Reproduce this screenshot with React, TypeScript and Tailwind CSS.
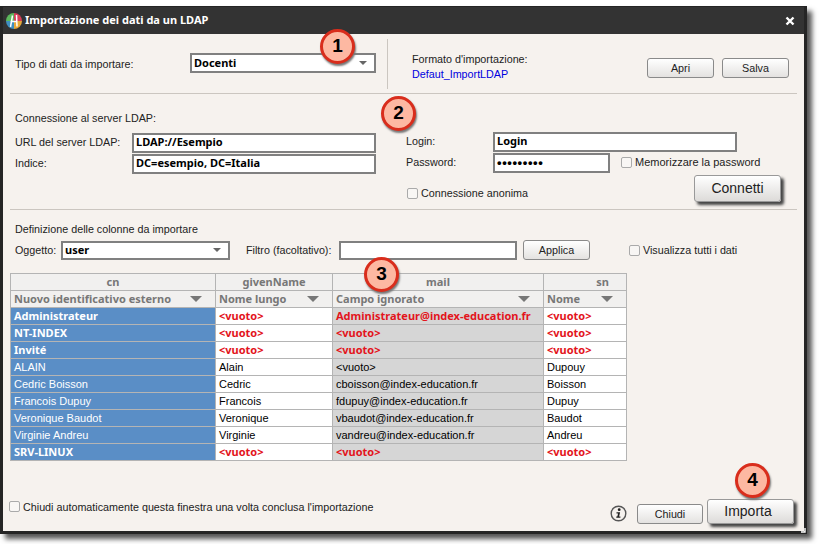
import React from "react";

const sans = "font-['Liberation_Sans',Arial,sans-serif] text-[10.75px] text-[#222]";
const sansCell = "font-['Liberation_Sans',Arial,sans-serif] text-[11px]";
const bold = "font-['Noto_Sans',Verdana,sans-serif] font-bold text-[11px]";

function Caret() {
  return <span className="w-0 h-0 border-x-[4px] border-x-transparent border-t-[4px] border-t-[#666]" />;
}

function Field({ w, h, value, caret, dots }: { w: string; h: string; value?: string; caret?: boolean; dots?: boolean }) {
  return (
    <div className={`${w} ${h} shrink-0 bg-white border-2 border-[#808080] flex items-center justify-between pl-[2px] pr-[7px] ${bold} text-black`}>
      {dots ? <span className="font-['Liberation_Sans',sans-serif] text-[13px] tracking-[0.6px]">•••••••••</span> : <span>{value}</span>}
      {caret && <Caret />}
    </div>
  );
}

function Btn({ label, w }: { label: string; w: string }) {
  return (
    <div className={`${w} h-[20px] shrink-0 rounded-[3px] border border-[#8a8a8a] bg-gradient-to-b from-white to-[#e4e2e0] flex items-center justify-center ${sans}`}>
      {label}
    </div>
  );
}

function BigBtn({ label, w, h, shift }: { label: string; w: string; h: string; shift?: string }) {
  return (
    <div className={`${w} ${h} ${shift ?? ""} shrink-0 rounded-[3px] border border-[#999] bg-gradient-to-b from-white to-[#dddbd9] shadow-[3px_3px_3px_#444] flex items-center justify-center font-['Liberation_Sans',Arial,sans-serif] text-[14px] text-[#222]`}>
      {label}
    </div>
  );
}

function Check({ label, wide }: { label: string; wide?: boolean }) {
  return (
    <div className={`flex items-center gap-[3px] ${sans}`}>
      <span className="w-[11px] h-[11px] rounded-[2px] border border-[#aaa] bg-[#f8f6f4]" />
      <span className={wide ? "text-[11px]" : ""}>{label}</span>
    </div>
  );
}

function Callout({ n, x, y }: { n: number; x: string; y: string }) {
  return (
    <div className={`absolute ${x} ${y} w-[35px] h-[35px] rounded-full bg-[#fdb8a2] border-[3px] border-[#d92d1c] shadow-[1px_2px_2px_#777] flex items-center justify-center font-['Liberation_Sans',Arial,sans-serif] font-bold text-[19px] text-black`}>
      {n}
    </div>
  );
}

function Logo() {
  return (
    <svg width="16" height="16" viewBox="0 0 16 16" className="shrink-0">
      <path d="M8 8V0a8 8 0 0 0-8 8z" fill="#5cb85c" />
      <path d="M8 8V0a8 8 0 0 1 8 8z" fill="#d9405a" />
      <path d="M8 8h8a8 8 0 0 1-8 8z" fill="#e8a838" />
      <path d="M8 8v8a8 8 0 0 1-8-8z" fill="#3f8fc0" />
      <path d="M4.5 14 6.5 2.5M11 13.5 10.5 2M4.5 8.5h7" stroke="#fff" strokeWidth="1.5" fill="none" />
    </svg>
  );
}

type Row = { cn: string; given: string; mail: string; sn: string; strong?: boolean };
const V = "<vuoto>";
const rows: Row[] = [
  { cn: "Administrateur", given: V, mail: "Administrateur@index-education.fr", sn: V, strong: true },
  { cn: "NT-INDEX", given: V, mail: V, sn: V, strong: true },
  { cn: "Invité", given: V, mail: V, sn: V, strong: true },
  { cn: "ALAIN", given: "Alain", mail: V, sn: "Dupouy" },
  { cn: "Cedric Boisson", given: "Cedric", mail: "cboisson@index-education.fr", sn: "Boisson" },
  { cn: "Francois Dupuy", given: "Francois", mail: "fdupuy@index-education.fr", sn: "Dupuy" },
  { cn: "Veronique Baudot", given: "Veronique", mail: "vbaudot@index-education.fr", sn: "Baudot" },
  { cn: "Virginie Andreu", given: "Virginie", mail: "vandreu@index-education.fr", sn: "Andreu" },
  { cn: "SRV-LINUX", given: V, mail: V, sn: V, strong: true },
];

const cols = "grid grid-cols-[205px_117px_211px_83px]";
const cell = "h-[17px] border-r border-b border-[#b4b4b4] flex items-center px-[3px] overflow-hidden whitespace-nowrap";

function Table() {
  const heads = [
    ["cn", "Nuovo identificativo esterno"],
    ["givenName", "Nome lungo"],
    ["mail", "Campo ignorato"],
    ["sn", "Nome"],
  ];
  return (
    <div className="ml-[7px] mt-[13px] w-[617px] border-l border-t border-[#b4b4b4]">
      <div className={cols}>
        {heads.map(([h]) => (
          <div key={h} className={`${cell} ${h === "sn" ? "justify-end pr-[17px]" : "justify-center"} bg-[#f1f0ef] ${bold} text-[#777]`}>{h}</div>
        ))}
        {heads.map(([, h]) => (
          <div key={h} className={`${cell} justify-between bg-[#f1f0ef] ${bold} text-[#777] pr-[13px]`}>
            <span>{h}</span>
            <span className="w-0 h-0 border-x-[6px] border-x-transparent border-t-[6px] border-t-[#777]" />
          </div>
        ))}
        {rows.map((r) => {
          const red = () => (r.strong ? `${bold} text-[#e3141c]` : `${sansCell} text-black`);
          return (
            <React.Fragment key={r.cn}>
              <div className={`${cell} bg-[#5a8ec6] text-white ${r.strong ? bold : sansCell}`}>{r.cn}</div>
              <div className={`${cell} bg-white ${red()}`}>{r.given}</div>
              <div className={`${cell} bg-[#d6d6d6] ${red()}`}>{r.mail}</div>
              <div className={`${cell} bg-white ${red()}`}>{r.sn}</div>
            </React.Fragment>
          );
        })}
      </div>
    </div>
  );
}

export default function App() {
  return (
    <div className="w-[820px] h-[544px] bg-white overflow-hidden pt-[6px]">
      <div className="relative w-[807px] h-[528px] border-[3px] border-t border-[#252525] bg-[#f6f2ee] shadow-[5px_5px_5px_#555] flex flex-col">
        {/* Title bar */}
        <div className="h-[27px] shrink-0 bg-[#333] flex items-center pl-[3px] pr-[9px] gap-[3px]">
          <Logo />
          <span className="font-['Noto_Sans',Verdana,sans-serif] font-bold text-[11px] text-white">Importazione dei dati da un LDAP</span>
          <svg width="10" height="10" viewBox="0 0 10 10" className="ml-auto">
            <path d="M1.5 1.5 8.5 8.5M8.5 1.5 1.5 8.5" stroke="#fff" strokeWidth="2.4" />
          </svg>
        </div>

        {/* Section 1 */}
        <div className="mx-[7px] h-[60px] shrink-0 border-b border-[#cbc6c0] flex">
          <div className={`pl-[5px] w-[180px] pt-[22px] ${sans}`}>Tipo di dati da importare:</div>
          <div className="pt-[19px]"><Field w="w-[186px]" h="h-[20px]" value="Docenti" caret /></div>
          <div className="ml-[11px] mt-[5px] w-px h-[50px] bg-[#cbc6c0]" />
          <div className={`ml-[24px] pt-[18px] leading-[15px] w-[235px] ${sans}`}>
            <div>Formato d'importazione:</div>
            <div className="text-[#0000e0]">Defaut_ImportLDAP</div>
          </div>
          <div className="pt-[24px] flex gap-[8px]">
            <Btn label="Apri" w="w-[67px]" />
            <Btn label="Salva" w="w-[67px]" />
          </div>
        </div>

        {/* Section 2 */}
        <div className="mx-[7px] h-[116px] shrink-0 border-b border-[#cbc6c0] flex pl-[5px]">
          <div className="w-[366px]">
            <div className={`pt-[16px] h-[38px] ${sans}`}>Connessione al server LDAP:</div>
            <div className="flex items-center h-[21px]">
              <span className={`w-[117px] ${sans}`}>URL del server LDAP:</span>
              <Field w="w-[244px]" h="h-[20px]" value="LDAP://Esempio" />
            </div>
            <div className="flex items-center h-[21px]">
              <span className={`w-[117px] ${sans}`}>Indice:</span>
              <Field w="w-[244px]" h="h-[20px]" value="DC=esempio, DC=Italia" />
            </div>
          </div>
          <div className="w-[400px] pl-[25px] pt-[37px]">
            <div className="flex items-center h-[21px]">
              <span className={`w-[87px] ${sans}`}>Login:</span>
              <Field w="w-[244px]" h="h-[20px]" value="Login" />
            </div>
            <div className="flex items-center h-[21px]">
              <span className={`w-[87px] ${sans}`}>Password:</span>
              <Field w="w-[117px]" h="h-[20px]" dots />
              <div className="ml-[11px]"><Check label="Memorizzare la password" wide /></div>
            </div>
            <div className="flex">
              <div className="pt-[12px] ml-[1px] w-[289px]"><Check label="Connessione anonima" /></div>
              <div className="pt-[2px]"><BigBtn label="Connetti" w="w-[87px]" h="h-[27px]" /></div>
            </div>
          </div>
        </div>

        {/* Section 3 */}
        <div className="flex-1 flex flex-col min-h-0">
          <div className={`pl-[12px] pt-[11px] h-[30px] ${sans}`}>Definizione delle colonne da importare</div>
          <div className="pl-[12px] flex items-center h-[20px]">
            <span className={`w-[46px] ${sans}`}>Oggetto:</span>
            <Field w="w-[169px]" h="h-[19px]" value="user" caret />
            <span className={`ml-[16px] w-[93px] ${sans}`}>Filtro (facoltativo):</span>
            <Field w="w-[178px]" h="h-[19px]" />
            <div className="ml-[6px]"><Btn label="Applica" w="w-[67px]" /></div>
            <div className="ml-[39px]"><Check label="Visualizza tutti i dati" /></div>
          </div>
          <Table />

          {/* Footer */}
          <div className="mt-auto h-[38px] pb-[6px] flex items-end shrink-0 pl-[6px]">
            <div className="mb-[10px] w-[601px]"><Check label="Chiudi automaticamente questa finestra una volta conclusa l'importazione" /></div>
            <svg width="17" height="17" viewBox="0 0 17 17" className="mb-[3px] shrink-0">
              <circle cx="8.5" cy="8.5" r="7.3" fill="#f6f2ee" stroke="#555" strokeWidth="1.4" />
              <circle cx="9.2" cy="4.7" r="1.4" fill="#222" />
              <path d="M6.5 7.2h3.6l-1 4.4h1.3v1.2H6.3v-1.2h1l.8-3.2H6.5z" fill="#222" />
            </svg>
            <div className="ml-[10px] mb-[1px]"><Btn label="Chiudi" w="w-[66px]" /></div>
            <div className="ml-[4px] mb-[1px]"><BigBtn label="Importa" w="w-[87px]" h="h-[25px]" shift="pr-[5px]" /></div>
          </div>
        </div>

        <Callout n={1} x="left-[317px]" y="top-[22px]" />
        <Callout n={2} x="left-[378px]" y="top-[89px]" />
        <Callout n={3} x="left-[361px]" y="top-[250px]" />
        <Callout n={4} x="left-[732px]" y="top-[456px]" />
        <svg width="5" height="5" viewBox="0 0 5 5" className="absolute right-[-2px] bottom-[-2px]">
          <path d="M4 0v4H0" stroke="#fff" strokeWidth="1.4" fill="none" />
        </svg>
      </div>
    </div>
  );
}
